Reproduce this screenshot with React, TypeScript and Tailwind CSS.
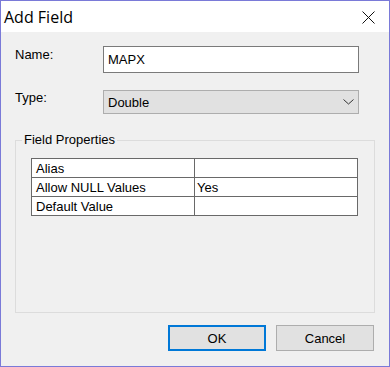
const rows = [
  { name: "Alias", value: "" },
  { name: "Allow NULL Values", value: "Yes" },
  { name: "Default Value", value: "" },
];

export default function App() {
  return (
    <div className="flex h-[367px] w-[390px] flex-col border border-[#7a7ad8] bg-[#f0f0f0] font-['Liberation_Sans',Arial,sans-serif] text-[13px] leading-[15px] text-black">
      <div className="flex h-[31px] shrink-0 items-center justify-between bg-white pl-[3px] pr-[14px]">
        <span className="font-['Open_Sans',sans-serif] text-[16px] leading-[20px]">Add Field</span>
        <svg width="13" height="13" viewBox="0 0 13 13" className="mt-[1px]">
          <path d="M0.5 0.5 L12.5 12.5 M12.5 0.5 L0.5 12.5" stroke="#111" strokeWidth="1" fill="none" />
        </svg>
      </div>

      <div className="flex flex-1 flex-col pl-[14px] pr-[15px]">
        <div className="mt-[14px] flex items-start">
          <span className="w-[88px] pt-[1px]">Name:</span>
          <div className="flex h-[27px] w-[256px] items-center border border-[#7a7a7a] bg-white pl-[4px]">
            MAPX
          </div>
        </div>

        <div className="mt-[17px] flex items-start">
          <span className="w-[88px]">Type:</span>
          <div className="flex h-[24px] w-[256px] items-center justify-between border border-[#adadad] bg-[#e1e1e1] pl-[4px] pr-[4px]">
            <span>Double</span>
            <svg width="11" height="6" viewBox="0 0 11 6">
              <path d="M0.5 0.5 L5.5 5 L10.5 0.5" stroke="#333" strokeWidth="1" fill="none" />
            </svg>
          </div>
        </div>

        <fieldset className="mt-[18px] h-[181px] w-[360px] border border-[#dcdcdc] pl-[15px] pt-[10px]">
          <legend className="ml-[-9px] px-[2px] leading-[16px]">Field Properties</legend>
          <table className="w-[327px] border-collapse bg-white">
            <tbody>
              {rows.map((r) => (
                <tr key={r.name} className="h-[19px]">
                  <td className="w-[163px] border border-[#696969] px-[4px] py-0">{r.name}</td>
                  <td className="border border-[#696969] px-[2px] py-0">{r.value}</td>
                </tr>
              ))}
            </tbody>
          </table>
        </fieldset>

        <div className="mt-[12px] flex justify-end gap-[10px]">
          <button className="h-[26px] w-[98px] border-2 border-[#0078d7] bg-[#e1e1e1]">OK</button>
          <button className="h-[26px] w-[98px] border border-[#adadad] bg-[#e1e1e1]">Cancel</button>
        </div>
      </div>
    </div>
  );
}
